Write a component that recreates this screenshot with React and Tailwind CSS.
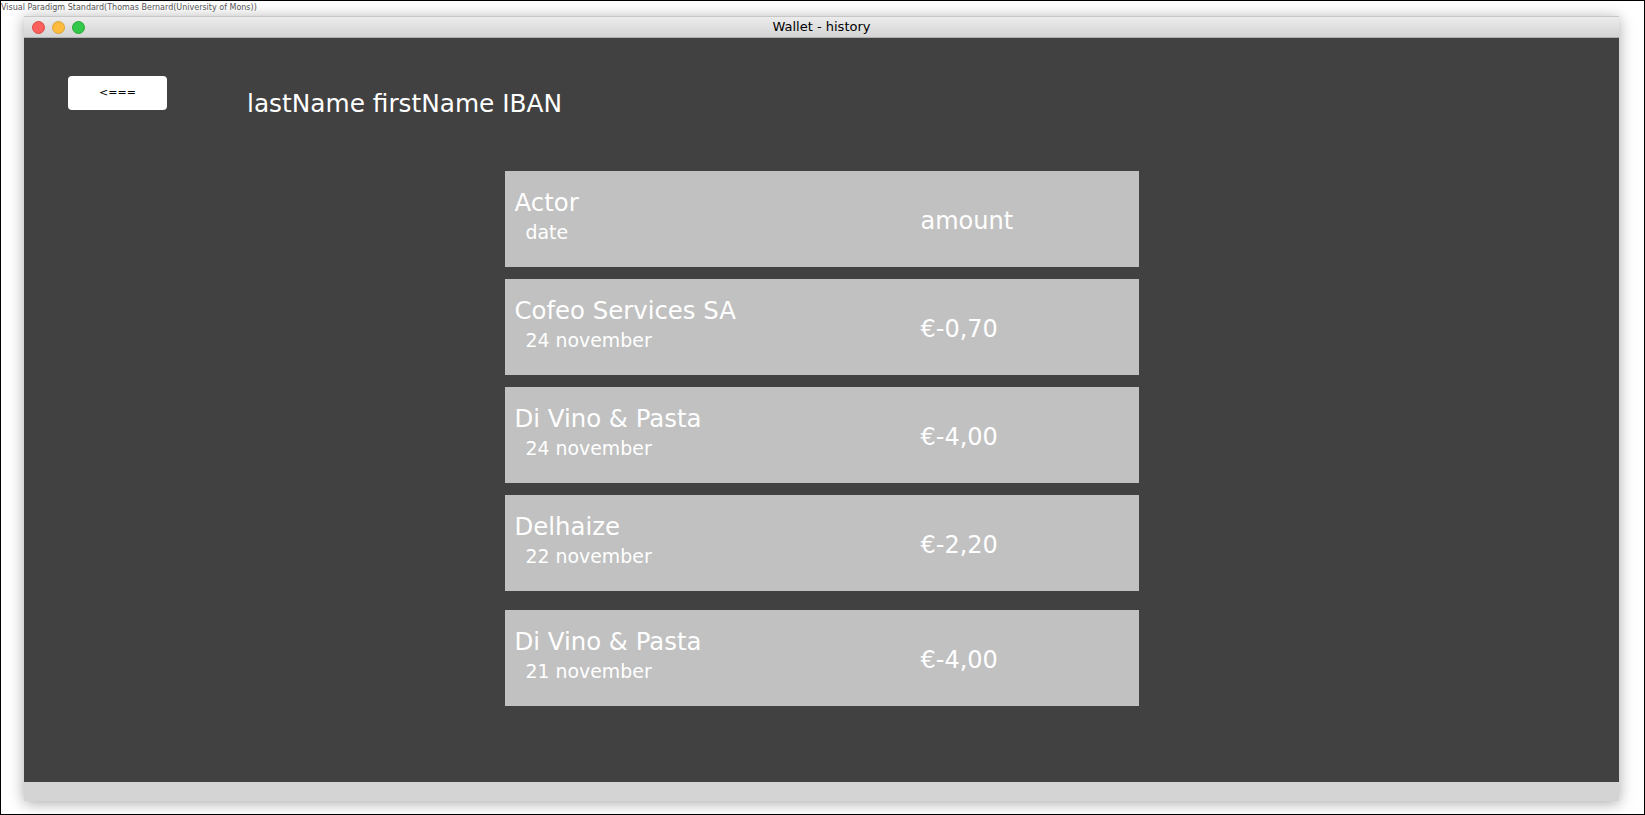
import React from 'react';

const rows = [
    { actor: 'Actor', date: 'date', amount: 'amount' },
    { actor: 'Cofeo Services SA', date: '24 november', amount: '€-0,70' },
    { actor: 'Di Vino & Pasta', date: '24 november', amount: '€-4,00' },
    { actor: 'Delhaize', date: '22 november', amount: '€-2,20' },
    { actor: 'Di Vino & Pasta', date: '21 november', amount: '€-4,00', last: true },
];

const font = { fontFamily: '"DejaVu Sans", "Liberation Sans", sans-serif' };

const TrafficLights = () => (
    <div className="flex items-center gap-[7px] pl-[8px]">
        <span className="w-[13px] h-[13px] rounded-full bg-[#fc605c] border border-[#de4a43]" />
        <span className="w-[13px] h-[13px] rounded-full bg-[#fdbc40] border border-[#dea236]" />
        <span className="w-[13px] h-[13px] rounded-full bg-[#34c84a] border border-[#27aa35]" />
    </div>
);

const HistoryRow = ({ row }) => (
    <div className={`flex items-start h-[96px] bg-[#c1c1c1] text-white ${row.last ? 'mt-[7px]' : ''}`}>
        <div className="w-[416px] pl-[10px] pt-[18px]">
            <div className="text-[24.4px] leading-[28px] whitespace-nowrap">{row.actor}</div>
            <div className="ml-[11px] mt-[4px] text-[18.9px] leading-[22px] whitespace-nowrap">{row.date}</div>
        </div>
        <div className="pt-[36px] text-[24px] leading-[28px] whitespace-nowrap">{row.amount}</div>
    </div>
);

export default function App() {
    return (
        <div className="w-[1645px] h-[815px] bg-white border border-black overflow-hidden" style={font}>
            <div className="h-[15px] pt-[2px] text-[8px] leading-[10px] text-[#555] whitespace-nowrap">
                Visual Paradigm Standard(Thomas Bernard(University of Mons))
            </div>

            {/* Window */}
            <div className="ml-[23px] w-[1595px] flex flex-col shadow-[0_2px_14px_rgba(0,0,0,0.35)]">
                <div className="h-[22px] grid grid-cols-[1fr_auto_1fr] items-center bg-gradient-to-b from-[#ececec] to-[#d4d4d4] border-t border-[#c8c8c8] border-b border-b-[#b0b0b0]">
                    <TrafficLights />
                    <div className="text-[13px] leading-[16px] text-black">Wallet - history</div>
                    <div />
                </div>

                <div className="h-[744px] bg-[#414141]">
                    <div className="flex items-start pt-[38px] h-[81px]">
                        <button className="ml-[44px] w-[99px] h-[34px] rounded-[4px] bg-white text-black text-[11px] leading-[34px] text-center">
                            {'<==='}
                        </button>
                        <div className="ml-[80px] mt-[13px] text-white text-[24.8px] leading-[30px] whitespace-nowrap">
                            lastName firstName IBAN
                        </div>
                    </div>

                    <div className="mt-[52px] mx-auto w-[634px] flex flex-col gap-[12px]">
                        {rows.map((row, i) => <HistoryRow key={i} row={row} />)}
                    </div>
                </div>

                <div className="h-[19px] bg-[#d4d4d4]" />
            </div>
        </div>
    );
}
